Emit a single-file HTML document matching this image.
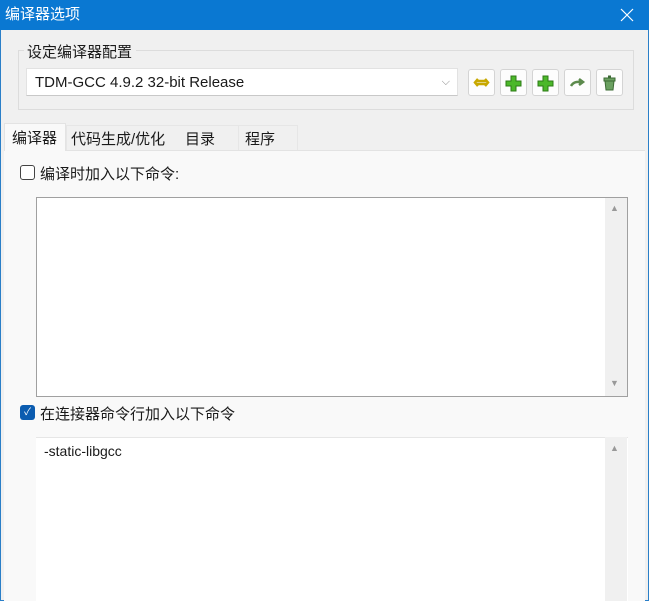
<!DOCTYPE html><html><head><meta charset="utf-8"><style>
*{box-sizing:border-box;margin:0;padding:0}
body{width:649px;height:601px;overflow:hidden;background:#f0f0f0;font-family:"Liberation Sans","Noto Sans CJK SC",sans-serif;font-size:14px;color:#1a1a1a;position:relative}
.a{position:absolute}
.title{left:0;top:0;width:649px;height:30px;background:#0a78d2;color:#fff;font-size:15px;line-height:29px;padding-left:5px}
.btn{width:27px;height:27px;top:69px;background:#fdfdfd;border:1px solid #d4d4d4;border-radius:3px}
.ta{background:#fff;border:1px solid #a0a0a0}
.sb{background:#f0f0f0}
</style></head><body>
<div class="a" style="left:0;top:0;width:649px;height:601px;border:1px solid #2a7fc8"></div>
<div class="a title">编译器选项<svg class="a" style="right:15px;top:8px" width="14" height="14"><path d="M1 1L13 13M13 1L1 13" stroke="#fff" stroke-width="1.2"/></svg></div>
<div class="a" style="left:18px;top:50px;width:616px;height:60px;border:1px solid #dcdcdc"></div>
<div class="a" style="left:24px;top:41px;background:#f0f0f0;padding:0 4px 0 3px;font-size:15px">设定编译器配置</div>
<div class="a" style="left:26px;top:68px;width:432px;height:28px;background:#fff;border:1px solid #e2e2e2;border-bottom-color:#c8c8c8;line-height:27px;padding-left:8px;font-size:15px">TDM-GCC 4.9.2 32-bit Release<span class="a" style="right:7px;top:0;color:#888;font-size:11px">⌵</span></div>
<div class="a btn" style="left:468px"><svg width="25" height="25"><path d="M7 11h11M7 14h11M9 9l-3 3.5 3 3.5M16 9l3 3.5-3 3.5" stroke="#c8a800" stroke-width="2.5" fill="none"/></svg></div>
<div class="a btn" style="left:500px"><svg width="25" height="25"><path d="M10 6h5v5h5v5h-5v5h-5v-5H5v-5h5z" fill="#4cb82a" stroke="#2d7a16"/></svg></div>
<div class="a btn" style="left:532px"><svg width="25" height="25"><path d="M10 6h5v5h5v5h-5v5h-5v-5H5v-5h5z" fill="#4cb82a" stroke="#2d7a16"/></svg></div>
<div class="a btn" style="left:564px"><svg width="25" height="25"><path d="M6 16c3-5 7-4 10-4M14 9l4 3-4 3" stroke="#5c8a4c" stroke-width="2.5" fill="none"/></svg></div>
<div class="a btn" style="left:596px"><svg width="25" height="25"><path d="M8 11h9l-1 9H9z" fill="#6aa060" stroke="#3c6a34"/><rect x="7" y="8" width="11" height="3" fill="#6aa060" stroke="#3c6a34"/><rect x="11" y="5.5" width="3" height="2.5" fill="#3c6a34"/></svg></div>
<div class="a" style="left:4px;top:150px;width:641px;height:451px;background:#f9f9f9;border-top:1px solid #e3e3e3"></div>
<div class="a" style="left:4px;top:123px;width:62px;height:28px;background:#f9f9f9;border:1px solid #e3e3e3;border-bottom:none;padding:3px 0 0 7px;font-size:15px">编译器</div>
<div class="a" style="left:66px;top:125px;width:232px;height:25px;background:#f0f0f0;border:1px solid #e6e6e6;border-bottom:none"></div>
<div class="a" style="left:71px;top:128px;font-size:15px">代码生成/优化</div>
<div class="a" style="left:185px;top:128px;font-size:15px">目录</div>
<div class="a" style="left:238px;top:125px;width:1px;height:25px;background:#e6e6e6"></div>
<div class="a" style="left:245px;top:128px;font-size:15px">程序</div>
<div class="a" style="left:20px;top:165px;width:15px;height:15px;border:1px solid #444;border-radius:3px;background:#fff"></div>
<div class="a" style="left:40px;top:163px;font-size:15px">编译时加入以下命令:</div>
<div class="a ta" style="left:36px;top:197px;width:592px;height:200px"></div>
<div class="a sb" style="left:605px;top:198px;width:22px;height:198px"></div>
<div class="a" style="left:610px;top:203px;color:#999;font-size:9px">▲</div>
<div class="a" style="left:610px;top:378px;color:#999;font-size:9px">▼</div>
<div class="a" style="left:20px;top:405px;width:15px;height:15px;background:#0b5cb0;border-radius:3px;color:#fff;font-size:10px;line-height:15px;text-align:center">✓</div>
<div class="a" style="left:40px;top:403px;font-size:15px">在连接器命令行加入以下命令</div>
<div class="a" style="left:36px;top:437px;width:592px;height:164px;background:#fff;border-top:1px solid #e6e6e6"></div>
<div class="a sb" style="left:605px;top:437px;width:22px;height:164px"></div>
<div class="a" style="left:610px;top:443px;color:#999;font-size:9px">▲</div>
<div class="a" style="left:44px;top:443px;font-size:14px">-static-libgcc</div>
</body></html>
